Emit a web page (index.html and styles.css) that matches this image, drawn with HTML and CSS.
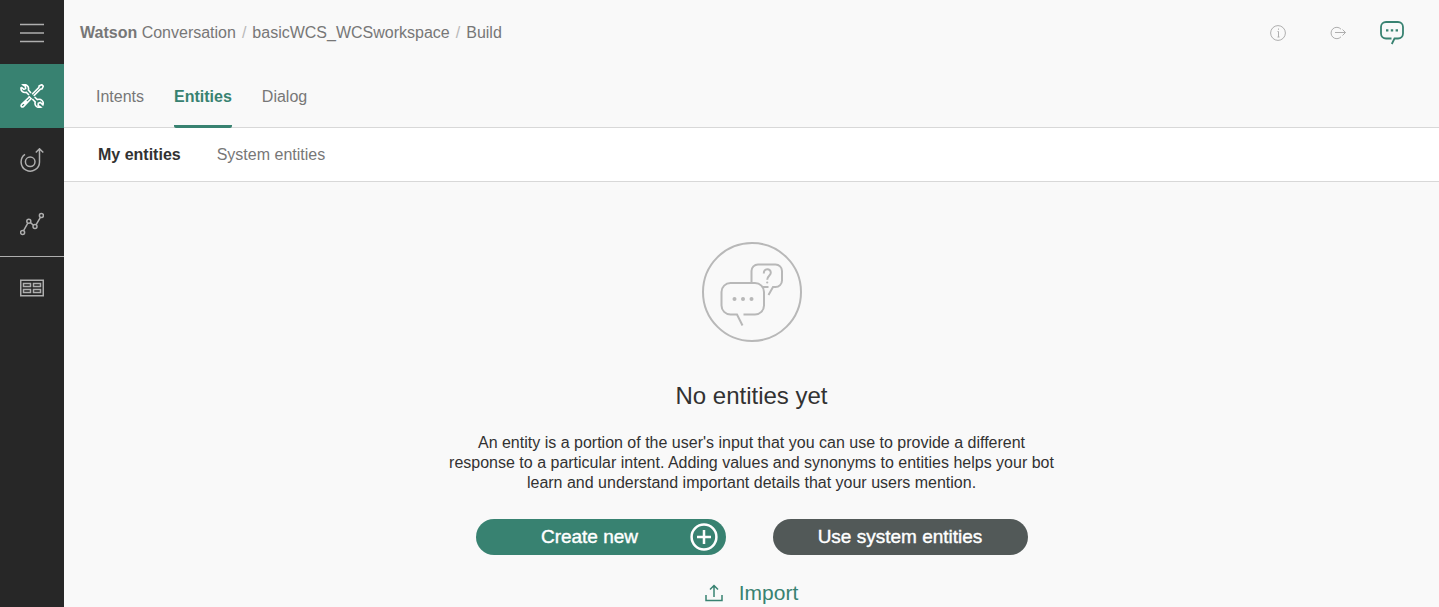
FILE: index.html
```html
<!DOCTYPE html>
<html lang="en">
<head>
<meta charset="utf-8">
<title>Watson Conversation</title>
<link rel="stylesheet" href="styles.css">
</head>
<body>
<div class="app">
  <nav class="rail" aria-label="Main">
    <button class="rail-item" type="button" aria-label="Menu">
      <svg class="icon" width="24" height="24" viewBox="0 0 24 24"><path d="M0 4.500h24M0 13h24M0 21.500h24" stroke-width="1.500"/></svg>
    </button>
    <a class="rail-item rail-item-active" href="#build" aria-label="Build">
      <svg class="icon" width="24" height="24" viewBox="0 0 24 24">
        <path stroke-width="1.600" d="M1.200 3.200 3.800 5.400 5.600 4.500 5.400 2.300 3 .8C6-.1 9.300 2 8.400 6L11 9.100M14.600 13 17.400 15.600C21 14.400 24.200 17.500 22.900 20.800L20.300 18.400 18.300 19.200 18.100 21.400 20.700 23.200C17 24 14.200 21.500 15.200 18L12.300 15M1.200 3.200C.2 6.500 3 9.200 6.400 8.400L9 11"/>
        <path stroke-width="1.600" d="m12.100 10.300 6.700-6.700.4-1.700L21.800.7l1.500 1.500-1.200 2.600-1.700.4-6.700 6.700M8.700 12.300l3 3M9.300 13 1.700 20.300C.2 22.100 2 23.900 3.700 22.400L11 14.700M4 20.200l3-3"/>
      </svg>
    </a>
    <a class="rail-item" href="#improve" aria-label="Improve">
      <svg class="icon" width="24" height="24" viewBox="0 0 24 24"><circle cx="10.200" cy="13.800" r="4.800"/><path d="M5 6.400A9.200 9.200 0 1 0 19.500 13.800V1M15.800 4.500 19.500.8l3.800 3.700"/></svg>
    </a>
    <a class="rail-item" href="#analytics" aria-label="Analytics">
      <svg class="icon" width="24" height="24" viewBox="0 0 24 24"><circle cx="2.600" cy="20.400" r="2"/><circle cx="8.800" cy="9.300" r="2"/><circle cx="15" cy="14.600" r="2"/><circle cx="21.400" cy="3.500" r="2"/><path d="m3.600 18.600 4.200-7.500M10.400 10.600l3.100 2.700M16 12.900l4.400-7.600"/></svg>
    </a>
    <a class="rail-item rail-item-divided" href="#workspaces" aria-label="Workspaces">
      <svg class="icon" width="24" height="24" viewBox="0 0 24 24"><path d="M.750 3.250h22.500v15.500H.750zM3.500 6.500h7v3h-7zM13.500 6.500h7v3h-7zM3.500 12.500h7v3h-7zM13.500 12.500h7v3h-7z"/></svg>
    </a>
  </nav>

  <div class="page">
    <header class="header">
      <div class="topbar">
        <nav class="crumbs" aria-label="Breadcrumb">
          <a href="#home"><b>Watson</b> Conversation</a>
          <span class="slash">/</span>
          <a href="#workspace">basicWCS_WCSworkspace</a>
          <span class="slash">/</span>
          <a href="#build">Build</a>
        </nav>
        <div class="tools">
          <button class="tool" type="button" aria-label="Information">
            <svg class="icon" width="16" height="16" viewBox="0 0 16 16"><circle cx="8" cy="8" r="7.400" stroke-width="1"/><path stroke-width="1" d="M8.500 6.500V12M8.500 3.500v1.300M7.500 6.500h1M7.500 12h2"/></svg>
          </button>
          <button class="tool" type="button" aria-label="Log out">
            <svg class="icon" width="16" height="16" viewBox="0 0 16 16"><path stroke-width="1" d="M11 4.200A5.700 5.700 0 1 0 11 11.800M5 7.500h10.500M12.500 4.500l3 3-3 3"/></svg>
          </button>
          <button class="tool tool-chat" type="button" aria-label="Try it out">
            <svg class="icon" width="24" height="24" viewBox="0 0 24 24"><path stroke-width="1.800" d="M11.500 17.500H6A5 5 0 0 1 1 12.500V6A5 5 0 0 1 6 1h12a5 5 0 0 1 5 5v6.500a5 5 0 0 1-5 5h-3.500L11.800 23"/><path class="dots" d="M6 8.200h2.400v2.400H6zM10.800 8.200h2.400v2.400h-2.400zM15.600 8.200H18v2.400h-2.400z"/></svg>
          </button>
        </div>
      </div>
      <nav class="tabs" aria-label="Build sections">
        <a class="tab" href="#intents">Intents</a>
        <a class="tab tab-active" href="#entities">Entities</a>
        <a class="tab" href="#dialog">Dialog</a>
      </nav>
    </header>

    <nav class="subtabs" aria-label="Entity types">
      <a class="subtab subtab-active" href="#my">My entities</a>
      <a class="subtab" href="#system">System entities</a>
    </nav>

    <main class="empty">
      <svg class="icon empty-art" width="100" height="100" viewBox="0 0 100 100">
        <circle cx="50" cy="50" r="49"/>
        <path d="M41.500 72.500H53a9 9 0 0 0 9-9V50a9 9 0 0 0-9-9H28.500a9 9 0 0 0-9 9v13.500a9 9 0 0 0 9 9h6.500l5.500 11M49.500 41V29a6.500 6.500 0 0 1 6.500-6.500h17.500A6.500 6.500 0 0 1 80 29v9.500a6.500 6.500 0 0 1-6.500 6.500H71l-4.500 8M60 45h6.500"/>
        <path d="M61.800 31.500c0-5.400 7-5.400 7-.8 0 3-3.600 3.200-3.600 7"/>
        <circle class="dots" cx="32.500" cy="57" r="2"/><circle class="dots" cx="41" cy="57" r="2"/><circle class="dots" cx="49.500" cy="57" r="2"/><circle class="dots" cx="65.200" cy="40.500" r="1.100"/>
      </svg>
      <h1 class="empty-title">No entities yet</h1>
      <p class="empty-text">An entity is a portion of the user's input that you can use to provide a different response to a particular intent. Adding values and synonyms to entities helps your bot learn and understand important details that your users mention.</p>
      <div class="actions">
        <button class="pill pill-create" type="button">
          <span>Create new</span>
          <svg class="icon" width="28" height="28" viewBox="0 0 28 28"><circle cx="14" cy="14" r="12.400"/><path d="M14 7v14M7 14h14"/></svg>
        </button>
        <button class="pill pill-system" type="button">Use system entities</button>
      </div>
      <button class="import" type="button">
        <svg class="icon" width="18" height="18" viewBox="0 0 18 18"><path d="M1 11v5.500h16V11M9 13V1.500M5 5.500l4-4 4 4"/></svg>
        Import
      </button>
    </main>
  </div>
</div>
</body>
</html>
```
FILE: styles.css
```css
* { box-sizing: border-box; }

body {
  margin: 0;
  background: #f9f9f9;
  color: #323232;
  font: 16px/20px "Liberation Sans", Arial, sans-serif;
}

a { color: inherit; text-decoration: none; }

button {
  margin: 0;
  padding: 0;
  border: 0;
  background: none;
  color: inherit;
  font: inherit;
  cursor: pointer;
}

.icon {
  display: block;
  flex: none;
  fill: none;
  stroke: currentColor;
  stroke-width: 1.5;
}

.dots { fill: currentColor; stroke: none; }

.app { display: flex; min-height: 100vh; }

.rail {
  display: flex;
  flex: none;
  flex-direction: column;
  width: 64px;
  background: #272727;
  color: #aeaeae;
}

.rail-item {
  display: flex;
  align-items: center;
  justify-content: center;
  height: 64px;
}

.rail-item-active { background: #388271; color: #fff; }
.rail-item-divided { border-top: 1px solid #aeaeae; }

.page { display: flex; flex: 1; flex-direction: column; min-width: 0; }

.header { border-bottom: 1px solid #d8d8d8; color: #777; }

.topbar {
  display: flex;
  align-items: center;
  justify-content: space-between;
  height: 64px;
  padding: 2px 23px 0 16px;
}

.crumbs { display: flex; gap: 6px; }
.slash { color: #b8b8b8; }

.tools { display: flex; align-items: center; color: #aeaeae; }
.tool { display: flex; align-items: center; justify-content: center; width: 60px; height: 32px; }
.tool-chat { width: 48px; color: #388271; }

.tabs { display: flex; gap: 30px; height: 64px; margin-bottom: -1px; padding: 0 32px; }

.tab { padding: 23px 0 18px; }

.tab-active {
  border-bottom: 3px solid #388271;
  border-radius: 2px;
  color: #388271;
  font-weight: bold;
}

.subtabs {
  display: flex;
  align-items: center;
  gap: 36px;
  height: 54px;
  padding: 0 34px;
  border-bottom: 1px solid #d8d8d8;
  color: #777;
  background: #fff;
}

.subtab-active { color: #323232; font-weight: bold; }

.empty {
  display: flex;
  flex-direction: column;
  align-items: center;
  padding-top: 60px;
  text-align: center;
}

.empty-art { color: #b8b8b8; stroke-width: 2; }

.empty-title {
  margin: 36px 0 0;
  font-size: 24px;
  font-weight: normal;
  line-height: 36px;
}

.empty-text { max-width: 610px; margin: 19px 0 0; }

.actions { display: flex; gap: 47px; margin-top: 26px; }

.pill {
  height: 36px;
  border-radius: 18px;
  color: #fff;
  font-size: 19px;
  -webkit-text-stroke: 0.4px #fff;
}

.pill-create {
  display: grid;
  grid-template-columns: 1fr 28px;
  align-items: center;
  width: 250px;
  padding: 0 8px 0 14px;
  background: #388271;
}

.pill-create .icon { stroke-width: 2.5; }
.pill-system { width: 255px; background: #525958; }

.import {
  display: flex;
  align-items: center;
  gap: 16px;
  margin-top: 28px;
  color: #388271;
  font-size: 21px;
}
```
